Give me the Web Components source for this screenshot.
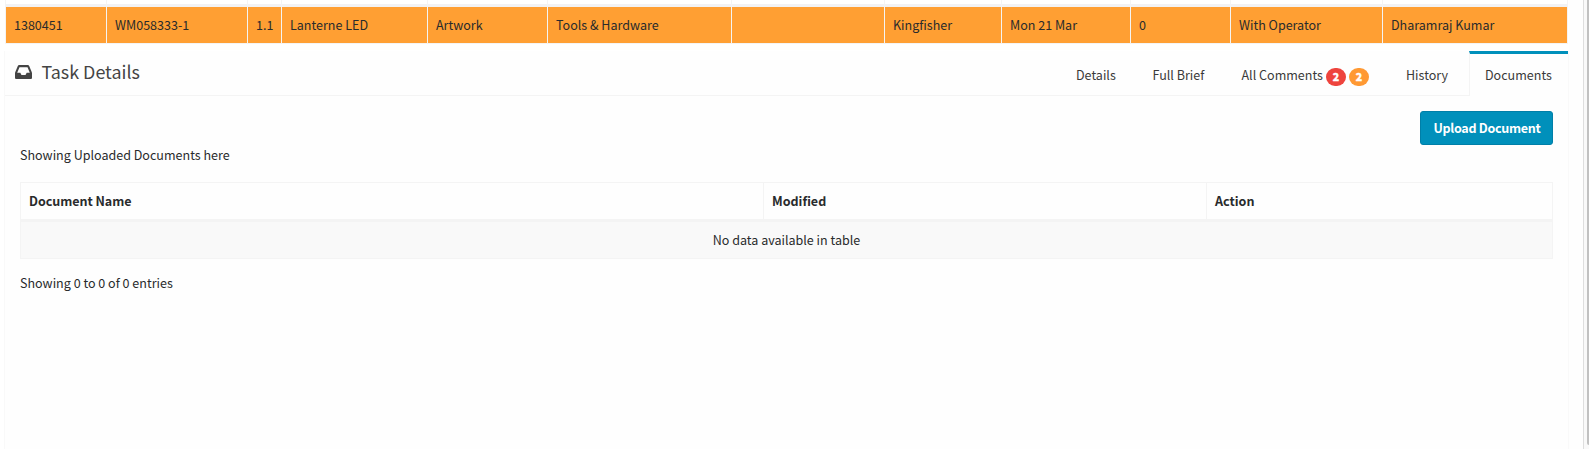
<!DOCTYPE html>
<html lang="en">
<head>
<meta charset="utf-8">
<title>Task Details</title>
<style>
html,body{margin:0;height:100%;overflow:hidden;background:#fff}
body{font:12.54px/20px "Noto Sans CJK SC","Open Sans",sans-serif;color:#292b2c}
</style>
</head>
<body>
<task-page>
  <task-row slot="row">
    <task-cell w="101">1380451</task-cell><task-cell w="141">WM058333-1</task-cell><task-cell w="34">1.1</task-cell><task-cell w="146">Lanterne LED</task-cell><task-cell w="120">Artwork</task-cell><task-cell w="184">Tools &amp; Hardware</task-cell><task-cell w="153"></task-cell><task-cell w="117">Kingfisher</task-cell><task-cell w="129">Mon 21 Mar</task-cell><task-cell w="100">0</task-cell><task-cell w="152">With Operator</task-cell><task-cell w="185">Dharamraj Kumar</task-cell>
  </task-row>
  <tab-bar slot="tabs" heading="Task Details">
    <tab-item w="76.500">Details</tab-item><tab-item w="89">Full Brief</tab-item><tab-item w="164.500">All Comments<count-badge color="#ee443d">2</count-badge><count-badge color="#ff9933">2</count-badge></tab-item><tab-item w="79">History</tab-item><tab-item w="99" active>Documents</tab-item>
  </tab-bar>
  <document-panel>
    <action-button slot="action">Upload Document</action-button>
    <span slot="intro">Showing Uploaded Documents here</span>
    <document-table></document-table>
    <span slot="info">Showing 0 to 0 of 0 entries</span>
  </document-panel>
</task-page>
<script>
function define(name, markup, init) {
  customElements.define(name, class extends HTMLElement {
    constructor() {
      super();
      this.attachShadow({ mode: 'open' }).innerHTML = markup;
    }
    connectedCallback() {
      if (init) init(this, this.shadowRoot);
    }
  });
}
const applyWidth = el => { el.style.width = el.getAttribute('w') + 'px'; };

define('task-page', `
<style>
:host{display:flex;height:449px;width:1589px}
main{width:1569px;display:flex;flex-direction:column;flex:none}
.panel{flex:1;margin:7px 0 0 4px;border-left:1px solid #f9f9f9;border-right:1px solid #f9f9f9;box-sizing:border-box;background:#fefefe;display:flex;flex-direction:column}
.gutter{flex:1;background:#fefefe}
.track{width:6px;box-sizing:border-box;border-left:1px solid #dedede;background:#f9f9f9;display:flex;justify-content:flex-end}
.thumb{width:2px;height:445px;background:#c1c1c1;border-radius:0 0 0 2px}
</style>
<main><slot name="row"></slot><div class="panel"><slot name="tabs"></slot><slot></slot></div></main>
<div class="gutter"></div><div class="track"><div class="thumb"></div></div>`);

define('task-row', `
<style>
:host{display:block;height:44px;width:1563px;margin-left:5px;box-sizing:border-box;border-right:1px solid #f4f4f4;border-bottom:1px solid #f4f4f4}
.cells{display:flex;height:43px}
</style><div class="cells"><slot></slot></div>`);

define('task-cell', `
<style>
:host{display:flex;flex-direction:column;flex:none;box-sizing:border-box;border-left:1px solid #f4f4f4}
.above{height:4px;background:#fff}.rule{height:3px;background:#f2f2f4}
.value{height:36px;box-sizing:border-box;padding:8px;background:#ff9f33;white-space:nowrap}
</style><div class="above"></div><div class="rule"></div><div class="value"><slot></slot></div>`, applyWidth);

define('tab-bar', `
<style>
:host{display:flex;height:45px;box-sizing:border-box;background:linear-gradient(#f4f4f4,#f4f4f4) 0 100%/100% 1px no-repeat;justify-content:space-between}
.heading{display:flex;padding:9px 0 0 10px;font-size:17.9px;line-height:22px;color:#444}
svg{width:17px;height:14px;margin:5px 9.5px 0 0;display:block}
nav{display:flex}
</style>
<div class="heading"><svg viewBox="0 0 17 14"><path fill="#444" fill-rule="evenodd" d="M4.2 0h8.6q1 0 1.4.9L16.7 7q.3.7.3 1.3v4.6q0 1.1-1.1 1.1H1.1Q0 14 0 12.900V8.300Q0 7.700.3 7L2.800.9Q3.200 0 4.200 0ZM4.500 2.200 2.200 7.800H5.300l1.200 2.200h4l1.200-2.200h3.100L12.500 2.200Z"/></svg><span></span></div>
<nav><slot></slot></nav>`, (el, root) => {
  root.querySelector('span').textContent = el.getAttribute('heading');
});

define('tab-item', `
<style>
:host{display:flex;flex:none;box-sizing:border-box;padding:14px 0 0 16px;white-space:nowrap;color:#3a3a3a}
:host([active]){border-top:3px solid #0090bb;border-left:1px solid #f4f4f4;padding:11px 0 0 15px;background:#fefefe;color:#3a3a3a}
</style><slot></slot>`, applyWidth);

define('count-badge', `
<style>
:host{display:block;width:20px;height:18px;margin:3px 0 0 3px;border-radius:9px;color:#fff;text-align:center;font-size:10.5px;line-height:18px;font-weight:900;-webkit-text-stroke:.4px #fff}
</style><slot></slot>`, el => { el.style.background = el.getAttribute('color'); });

define('document-panel', `
<style>
:host{display:flex;flex-direction:column;padding:15px 15px 0}
.action{display:flex;justify-content:flex-end}
.info{margin-top:14px}
</style>
<div class="action"><slot name="action"></slot></div>
<div><slot name="intro"></slot></div>
<slot></slot><div class="info"><slot name="info"></slot></div>`);

define('action-button', `
<style>
:host{display:block}
button{width:133px;height:34px;padding:0 0 0 1px;border:1px solid #007fa8;border-radius:3px;background:#0090bb;color:#fff;font:inherit;font-weight:600;letter-spacing:-.29px;display:block;text-align:center;white-space:nowrap}
</style><button><slot></slot></button>`);

define('document-table', `
<style>
:host{display:block;margin-top:17px;border:1px solid #f4f4f4;width:1533px;box-sizing:border-box;height:77px}
.head{display:grid;grid-template-columns:743px 443px 1fr;height:36px;border-bottom:3px solid #f4f4f4;font-weight:700}
.head div{padding:8px;border-right:1px solid #f4f4f4}
.head div:first-child{letter-spacing:-.05px}
.head div:last-child{border:0}
.empty{height:36px;box-sizing:border-box;background:#f9f9f9;text-align:center;padding-top:8px}
</style>
<div class="head"><div>Document Name</div><div>Modified</div><div>Action</div></div>
<div class="empty">No data available in table</div>`);
</script>
</body>
</html>
